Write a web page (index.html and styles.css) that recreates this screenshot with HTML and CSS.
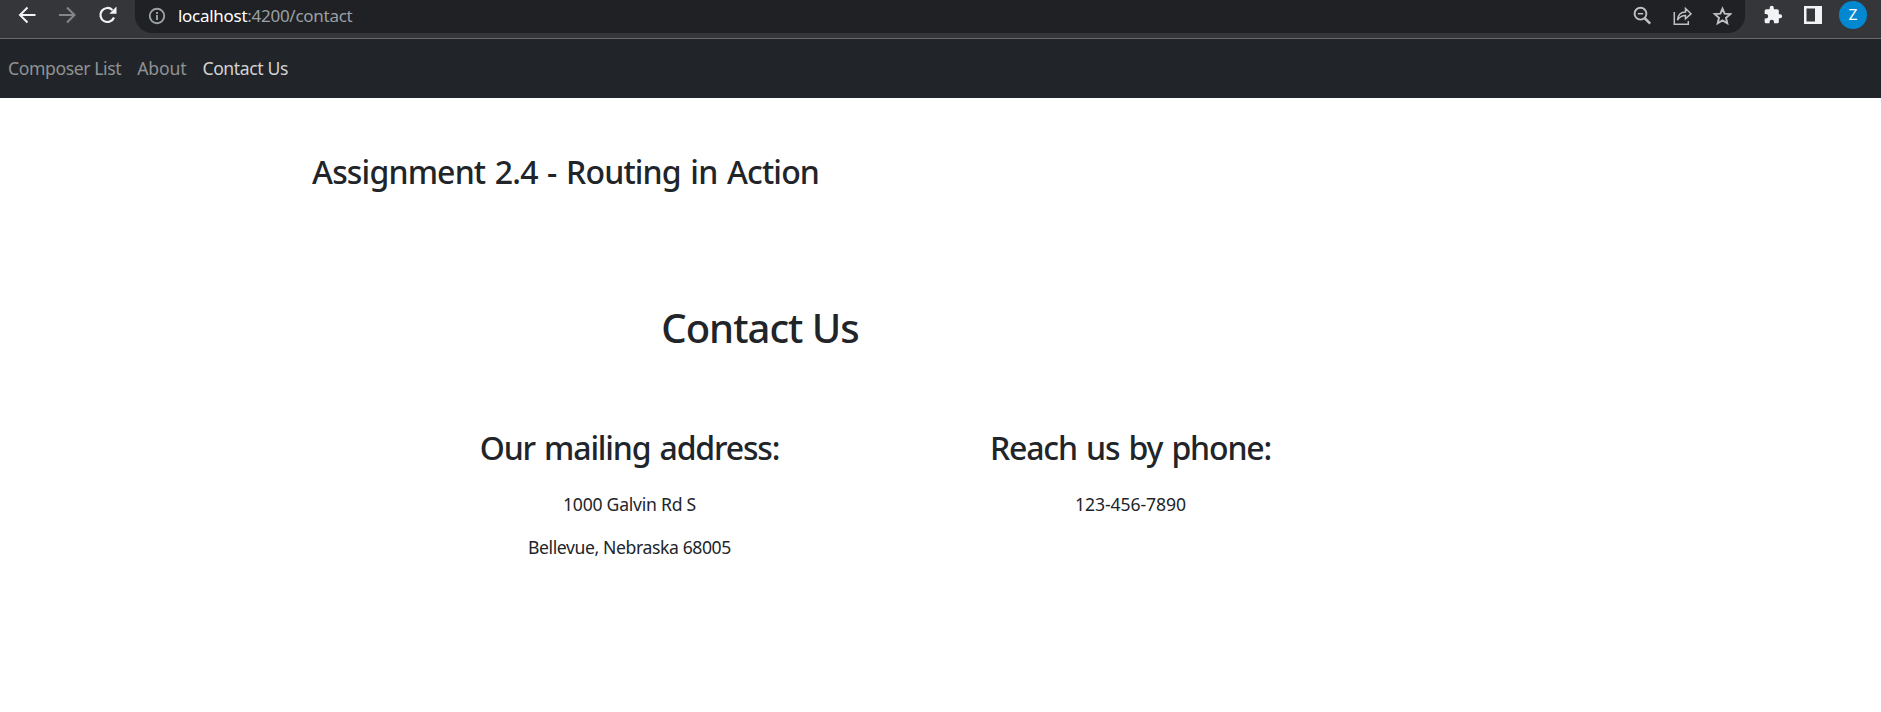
FILE: index.html
```html
<!DOCTYPE html>
<html lang="en">
<head>
<meta charset="utf-8">
<title>Contact Us</title>
<link rel="stylesheet" href="styles.css">
</head>
<body>
<div class="toolbar">
  <div class="controls">
    <svg width="20" height="20" viewBox="0 0 20 20" fill="none" stroke="#f1f3f4" stroke-width="2"><path d="M18.500 10H3M10.500 2.500 3 10l7.500 7.500"/></svg>
    <svg width="20" height="20" viewBox="0 0 20 20" fill="none" stroke="#85868a" stroke-width="2"><path d="M2 10h15M10 2.500l7.500 7.500-7.500 7.500"/></svg>
    <svg width="20" height="20" viewBox="0 0 20 20" fill="none" stroke="#f1f3f4" stroke-width="2.200"><path d="M17 12.500A7 7 0 1 1 15.400 5"/><path d="M19.500 1.500v7.200h-7.200z" fill="#f1f3f4" stroke="none"/></svg>
  </div>
  <div class="address">
    <svg class="info" width="18" height="18" viewBox="0 0 18 18" fill="none" stroke="#9aa0a6" stroke-width="1.900"><circle cx="9" cy="9" r="7.200"/><path d="M9 8v5M9 4.900v2"/></svg>
    <span class="url"><span class="host">localhost</span>:4200/contact</span>
    <div class="actions">
      <svg width="20" height="20" viewBox="0 0 20 20" fill="none" stroke="#bdc1c6" stroke-width="1.900"><circle cx="8.500" cy="7.700" r="5.900"/><path d="M5.800 7.700h5.400" stroke-width="1.500"/><path d="m12.500 12 5.700 5.700" stroke-width="2.500"/></svg>
      <svg width="20" height="20" viewBox="0 0 20 20" fill="none" stroke="#bdc1c6" stroke-width="1.500"><path d="M2.300 6v12.200h14V15"/><path d="M5.500 14c.5-5 3-8 8-8V2.500l5.500 5.300-5.500 5V9.600c-3.500 0-6 1.400-8 4.400z"/></svg>
      <svg width="20" height="20" viewBox="0 0 20 20" fill="none" stroke="#bdc1c6" stroke-width="1.900"><path d="m10.500 2.600 2.100 5 5.700.5-4.300 3.700 1.300 5.500-4.800-2.900-4.800 2.900L7 11.800 2.700 8.100l5.700-.5z"/></svg>
    </div>
  </div>
  <div class="extras">
    <svg width="20" height="20" viewBox="0 0 24 24" fill="#f1f3f4"><path d="M20.500 11H19V7c0-1.100-.9-2-2-2h-4V3.500a2.500 2.500 0 0 0-5 0V5H4c-1.100 0-2 .9-2 2v3.800h1.500a2.700 2.700 0 0 1 0 5.400H2V20c0 1.100.9 2 2 2h3.800v-1.500a2.700 2.700 0 0 1 5.400 0V22H17c1.100 0 2-.9 2-2v-4h1.500a2.500 2.500 0 0 0 0-5z"/></svg>
    <svg width="20" height="20" viewBox="0 0 20 20"><path fill="#f1f3f4" fill-rule="evenodd" d="M1 1h18v18H1zm2.500 2.500v13h8.500v-13z"/></svg>
    <span class="avatar">Z</span>
  </div>
</div>
<nav class="navbar">
  <a class="link list">Composer List</a>
  <a class="link about">About</a>
  <a class="link active">Contact Us</a>
</nav>
<main class="page">
  <h2 class="heading title">Assignment 2.4 - Routing in Action</h2>
  <h1 class="heading contact">Contact Us</h1>
  <div class="columns">
    <section class="column">
      <h2 class="heading mailing">Our mailing address:</h2>
      <p class="text">1000 Galvin Rd S</p>
      <p class="text city">Bellevue, Nebraska 68005</p>
    </section>
    <section class="column">
      <h2 class="heading phone">Reach us by phone:</h2>
      <p class="text number">123-456-7890</p>
    </section>
  </div>
</main>
</body>
</html>
```
FILE: styles.css
```css
* { box-sizing: border-box; }
body { margin: 0; height: 712px; overflow: hidden; background: #fff; color: #212529; font-family: "Noto Sans", sans-serif; }
svg { display: block; flex: none; }
.toolbar { display: flex; height: 39px; background: #35363a; border-bottom: 1px solid #68696c; }
.controls { display: flex; width: 135px; gap: 20px; padding: 5px 0 0 17px; }
.address { display: flex; align-items: flex-start; width: 1610px; height: 33px; background: #202124; border-radius: 0 0 17px 17px; }
.info { margin: 7px 0 0 13px; }
.url { margin-left: 12px; line-height: 31px; font-size: 17px; letter-spacing: -0.280px; color: #9aa0a6; white-space: nowrap; }
.host { color: #fff; }
.actions { display: flex; gap: 20px; margin: 6px 13px 0 auto; }
.extras { display: flex; gap: 20px; padding: 5px 0 0 18px; }
.avatar { width: 28px; height: 28px; margin: -4px 0 0 -4px; border-radius: 50%; background: #0288d1; color: #fff; font: 15px/28px Roboto, sans-serif; text-align: center; }
.navbar { display: flex; gap: 16px; height: 59px; padding-left: 8px; background: #212529; }
.link { line-height: 58px; font-size: 17.600px; letter-spacing: -0.400px; color: #909294; white-space: nowrap; }
.link.about { letter-spacing: -0.150px; }
.link.active { color: #d3d3d4; }
.heading { margin: 0; font-weight: 500; white-space: nowrap; }
.title { padding: 54px 0 0 312px; font-size: 32px; line-height: 40px; letter-spacing: -0.830px; word-spacing: 2px; }
.contact { width: 1520px; padding-top: 112px; font-size: 40px; line-height: 48px; letter-spacing: -1px; text-align: center; }
.columns { display: grid; grid-template-columns: 501px 501px; padding: 76px 0 0 379px; }
.column { text-align: center; }
.mailing, .phone { font-size: 32px; line-height: 40px; letter-spacing: -1.170px; word-spacing: 2px; }
.phone { letter-spacing: -1.150px; }
.text { margin: 23px 0 0; font-size: 17.600px; line-height: 26px; letter-spacing: -0.250px; }
.text.city { margin-top: 17px; letter-spacing: -0.400px; }
.text.number { letter-spacing: -0.070px; }
```
